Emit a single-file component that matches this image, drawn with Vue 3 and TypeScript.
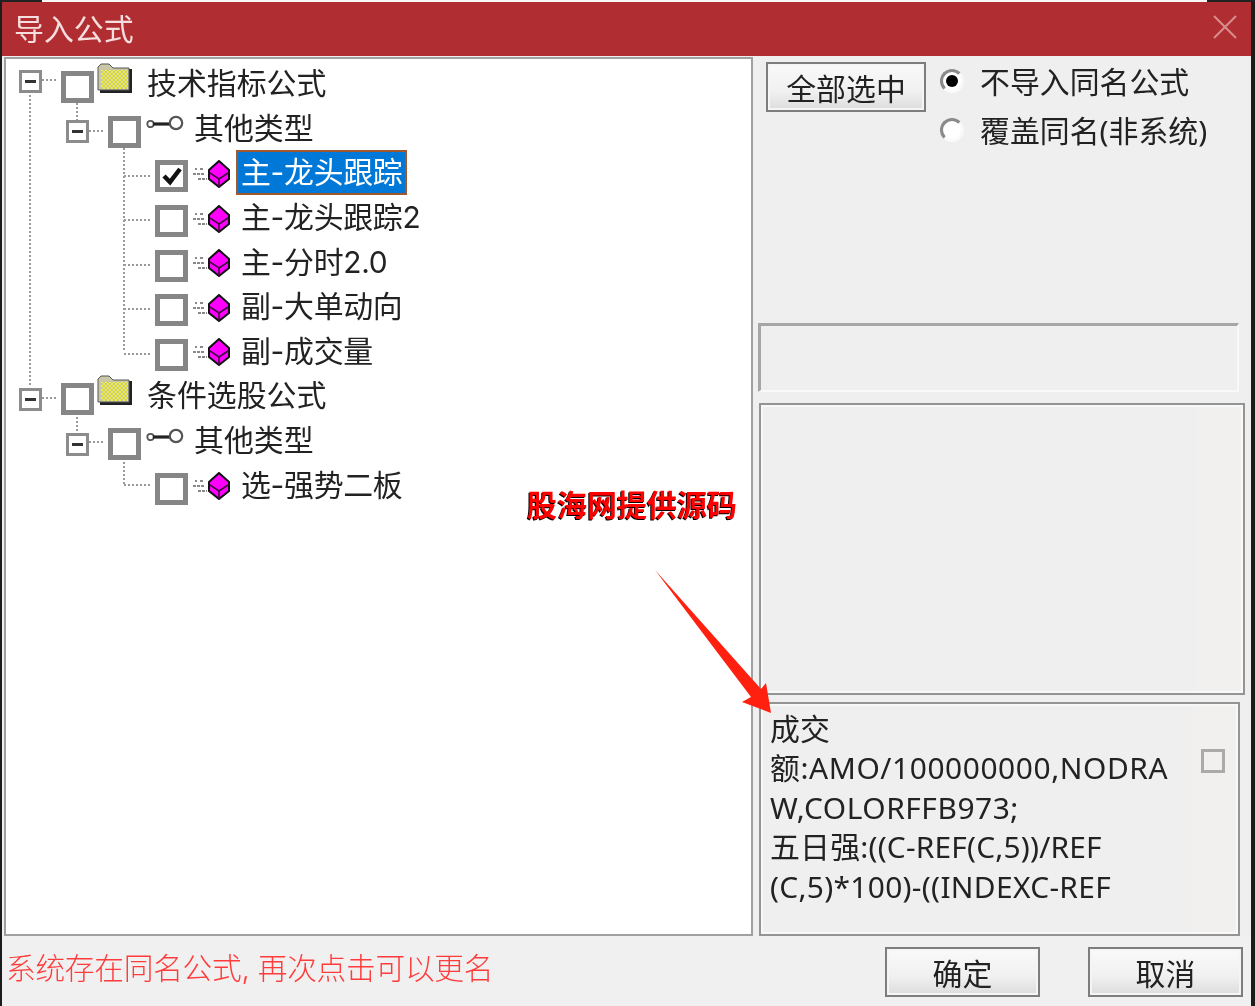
<script setup lang="ts">
interface Row {
  label: string
  depth: number
  kind: 'folder' | 'key' | 'cube'
  expander?: boolean
  checked?: boolean
  selected?: boolean
  first?: boolean
}

const rows: Row[] = [
  { label: '技术指标公式', depth: 0, kind: 'folder', expander: true, first: true },
  { label: '其他类型', depth: 1, kind: 'key', expander: true },
  { label: '主-龙头跟踪', depth: 2, kind: 'cube', checked: true, selected: true },
  { label: '主-龙头跟踪2', depth: 2, kind: 'cube' },
  { label: '主-分时2.0', depth: 2, kind: 'cube' },
  { label: '副-大单动向', depth: 2, kind: 'cube' },
  { label: '副-成交量', depth: 2, kind: 'cube' },
  { label: '条件选股公式', depth: 0, kind: 'folder', expander: true },
  { label: '其他类型', depth: 1, kind: 'key', expander: true },
  { label: '选-强势二板', depth: 2, kind: 'cube' },
]

const formula = [
  '成交',
  '额:AMO/100000000,NODRA',
  'W,COLORFFB973;',
  '五日强:((C-REF(C,5))/REF',
  '(C,5)*100)-((INDEXC-REF',
]

const connectors = [
  'M24 36V326',
  'M36 21H52',
  'M71 44V61',
  'M83 72H99',
  'M118 89V293',
  'M118 117H144',
  'M118 161H144',
  'M118 206H144',
  'M118 250H144',
  'M118 295H144',
  'M36 339H52',
  'M71 354V373',
  'M83 383H99',
  'M118 399V426',
  'M118 426H144',
]
</script>

<template>
  <div class="screen">
    <div class="top-strip"></div>
    <div class="window">
      <header class="titlebar">
        <span class="title">导入公式</span>
        <svg class="close" width="24" height="24" viewBox="0 0 24 24" aria-hidden="true">
          <path d="M1 1L23 23M23 1L1 23" stroke="#d98c8c" stroke-width="2" fill="none" />
        </svg>
      </header>

      <div class="body">
        <section class="tree">
          <svg class="connectors" width="200" height="460" viewBox="0 0 200 460" aria-hidden="true">
            <path
              v-for="(d, i) in connectors"
              :key="i"
              :d="d"
              stroke="#9a9a9a"
              stroke-width="2"
              stroke-dasharray="2 2"
              fill="none"
            />
          </svg>

          <div
            v-for="(row, i) in rows"
            :key="i"
            class="row"
            :class="'depth-' + row.depth"
          >
            <span class="expander-slot">
              <span v-if="row.expander" class="expander" :class="{ raised: row.first }"><i></i></span>
            </span>
            <span class="check">
              <svg v-if="row.checked" width="22" height="22" viewBox="0 0 22 22" aria-hidden="true">
                <path d="M3 11L9 17L19 4" stroke="#111" stroke-width="4.5" fill="none" />
              </svg>
            </span>

            <svg v-if="row.kind === 'folder'" class="icon folder" width="38" height="32" viewBox="0 0 38 32" aria-hidden="true">
              <defs>
                <pattern :id="'dither' + i" width="4" height="4" patternUnits="userSpaceOnUse">
                  <rect width="4" height="4" fill="#f0ee3c" />
                  <rect width="2" height="2" fill="#c9c98c" />
                  <rect x="2" y="2" width="2" height="2" fill="#c9c98c" />
                </pattern>
              </defs>
              <path d="M3 30V5L6 2H13L17 6H35V30Z" fill="#222" />
              <path d="M1 27V4L4 1H12L16 5H32V27Z" fill="#c8c8a8" stroke="#555" stroke-width="1" />
              <rect x="4" y="7" width="27" height="19" :fill="'url(#dither' + i + ')'" />
            </svg>

            <svg v-else-if="row.kind === 'key'" class="icon key" width="38" height="18" viewBox="0 0 38 18" aria-hidden="true">
              <circle cx="4.5" cy="9" r="3.2" fill="#fff" stroke="#555" stroke-width="1.8" />
              <rect x="7" y="7.4" width="17" height="3.2" fill="#222" />
              <circle cx="30" cy="8" r="6.2" fill="#fff" stroke="#555" stroke-width="2.2" />
            </svg>

            <svg v-else class="icon cube" width="38" height="28" viewBox="0 0 38 28" aria-hidden="true">
              <path d="M3 9H5M8 9H12M1 14H13M6 19H15" stroke="#888" stroke-width="2" stroke-dasharray="3 1" fill="none" />
              <path d="M27 1L37 10V19L27 27L17 19V10Z" fill="#ff00ff" stroke="#111" stroke-width="2" />
              <path d="M18 13L27 19L36 13M27 19V27" fill="none" stroke="#400a40" stroke-width="1.6" />
            </svg>

            <span class="label" :class="[row.kind + '-label', { selected: row.selected }]">{{ row.label }}</span>
          </div>
        </section>

        <aside class="side">
          <div class="side-top">
            <button class="btn select-all" type="button">全部选中</button>
            <div class="radios">
              <label class="radio-row">
                <span class="radio on"></span>
                <span class="radio-text">不导入同名公式</span>
              </label>
              <label class="radio-row">
                <span class="radio"></span>
                <span class="radio-text">覆盖同名(非系统)</span>
              </label>
            </div>
          </div>
          <div class="box-name"></div>
          <div class="box-list"></div>
          <div class="box-formula">
            <div class="formula-text">
              <div v-for="(line, i) in formula" :key="i" class="formula-line" :class="'line-' + i">{{ line }}</div>
            </div>
            <span class="small-check"></span>
          </div>
        </aside>
      </div>

      <footer class="footer">
        <span class="status">系统存在同名公式, 再次点击可以更名</span>
        <div class="footer-buttons">
          <button class="btn action" type="button">确定</button>
          <button class="btn action" type="button">取消</button>
        </div>
      </footer>
    </div>

    <div class="watermark">股海网提供源码</div>
    <svg class="arrow" width="130" height="155" viewBox="0 0 130 155" aria-hidden="true">
      <polygon points="5,0 111,119 116,113 121,143 92,132 101,127" fill="#ff2010" />
    </svg>
  </div>
</template>

<style>
html,
body {
  margin: 0;
  background: #1c1c1c;
}
</style>

<style scoped>
.screen {
  position: relative;
  width: 1255px;
  height: 1006px;
  overflow: hidden;
  background: #1c1c1c;
  font-family: Inter, "Noto Sans CJK SC", sans-serif;
  color: #222;
  filter: blur(0.5px);
}

.top-strip {
  height: 2px;
  background: linear-gradient(to right, #222 0 42px, #f6f6f6 42px 1207px, #222 1207px);
}

.window {
  width: 1249px;
  height: 1004px;
  margin-left: 2px;
  background: #efefef;
  display: flex;
  flex-direction: column;
}

.titlebar {
  height: 54px;
  flex: none;
  background: #b02e32;
  display: flex;
  align-items: center;
  justify-content: space-between;
  padding: 0 14px 0 12px;
  box-sizing: border-box;
}

.title {
  font-size: 29.9px;
  line-height: 54px;
  color: #f6dede;
}

.close {
  margin-bottom: 4px;
}

.body {
  flex: none;
  height: 880px;
  display: flex;
  padding-top: 1px;
  box-sizing: border-box;
}

.tree {
  position: relative;
  width: 749px;
  height: 879px;
  margin-left: 2px;
  flex: none;
  box-sizing: border-box;
  padding-top: 6px;
  background: #fff;
  border: 2px solid #a0a0a0;
}

.connectors {
  position: absolute;
  left: 0;
  top: 0;
  pointer-events: none;
}

.row {
  position: relative;
  display: flex;
  align-items: center;
  height: 44.6px;
  white-space: nowrap;
}

.depth-0 {
  padding-left: 13px;
}

.depth-1 {
  padding-left: 60px;
}

.depth-2 {
  padding-left: 107px;
}

.expander-slot {
  width: 42px;
  flex: none;
  display: flex;
  align-items: center;
}

.expander {
  width: 23px;
  height: 23px;
  box-sizing: border-box;
  border: 3px solid #8c8c8c;
  background: #fff;
  display: flex;
  align-items: center;
  justify-content: center;
}

.expander.raised {
  margin-bottom: 12px;
}

.expander i {
  display: block;
  width: 11px;
  height: 3px;
  background: #333;
}

.check {
  width: 33px;
  height: 32px;
  flex: none;
  box-sizing: border-box;
  border: 5px solid #868686;
  background: #fff;
  display: flex;
  align-items: center;
  justify-content: center;
}

.icon {
  flex: none;
}

.folder {
  margin-left: 3px;
  margin-bottom: 17px;
}

.key {
  margin-left: 5px;
  margin-bottom: 15px;
}

.cube {
  margin-left: 4px;
  margin-bottom: 5px;
}

.label {
  font-size: 29.9px;
  line-height: 41px;
  border: 2px solid transparent;
  padding: 0 3px;
  margin-bottom: 7px;
  color: #222;
}

.folder-label {
  margin-left: 7px;
}

.key-label {
  margin-left: 5px;
}

.cube-label {
  margin-left: 6px;
  letter-spacing: -0.3px;
}

.label.selected {
  background: #0078d7;
  color: #fff;
  border-color: #a0582c;
}

.side {
  width: 490px;
  margin-left: 5px;
  flex: none;
  display: flex;
  flex-direction: column;
}

.side-top {
  height: 266px;
  flex: none;
  display: flex;
  align-items: flex-start;
  padding: 5px 0 0 8px;
  box-sizing: border-box;
}

.btn {
  font-family: inherit;
  font-size: 29.9px;
  color: #222;
  padding: 0;
  border: 2px solid #7d7d7d;
  background: linear-gradient(to bottom, #fafafa 0%, #f0f0f0 60%, #dcdcdc 100%);
  box-shadow: inset 0 0 0 2px #f5f5f5;
  display: flex;
  align-items: center;
  justify-content: center;
  box-sizing: border-box;
}

.select-all {
  width: 160px;
  height: 50px;
  flex: none;
}

.radios {
  margin-left: 14px;
  margin-top: -4px;
  display: flex;
  flex-direction: column;
}

.radio-row {
  height: 49px;
  display: flex;
  align-items: center;
  font-family: "Noto Sans", "Noto Sans CJK SC", sans-serif;
  font-size: 29.9px;
}

.radio-text {
  margin-bottom: 6px;
}

.radio {
  width: 24px;
  height: 24px;
  margin-right: 16px;
  margin-bottom: 3px;
  flex: none;
  box-sizing: border-box;
  border-radius: 50%;
  border: 3px solid;
  border-color: #8a8a8a #f8f8f8 #fbfbfb #8a8a8a;
  background: #fff;
  display: flex;
  align-items: center;
  justify-content: center;
}

.radio.on::after {
  content: "";
  width: 12px;
  height: 12px;
  border-radius: 50%;
  background: #000;
}

.box-name {
  width: 481px;
  height: 69px;
  flex: none;
  box-sizing: border-box;
  border-style: solid;
  border-width: 3px 2px 2px 3px;
  border-color: #a6a6a6 #f9f9f9 #f9f9f9 #a6a6a6;
}

.box-list {
  width: 486px;
  height: 292px;
  margin: 11px 0 0 1px;
  flex: none;
  box-sizing: border-box;
  border: 2px solid #949494;
  box-shadow: inset 0 0 0 2px #f8f8f8;
  background: linear-gradient(to right, #efefef calc(100% - 46px), #f1f0ee 0);
}

.box-formula {
  width: 481px;
  height: 234px;
  margin: 7px 0 0 1px;
  flex: none;
  position: relative;
  box-sizing: border-box;
  border: 2px solid #949494;
  box-shadow: inset 0 0 0 2px #f8f8f8;
  background: linear-gradient(to right, #efefef calc(100% - 46px), #f1f0ee 0);
  display: flex;
  justify-content: space-between;
  padding: 5px 13px 0 9px;
}

.formula-line {
  font-family: "Noto Sans", "Noto Sans CJK SC", sans-serif;
  font-size: 29.9px;
  line-height: 39.4px;
  white-space: nowrap;
  color: #222;
}

.line-1 {
  letter-spacing: 0.58px;
}

.line-2 {
  letter-spacing: 0.55px;
}

.line-3 {
  letter-spacing: 0.2px;
}

.line-4 {
  letter-spacing: 0.32px;
}

.small-check {
  width: 24px;
  height: 24px;
  margin-top: 40px;
  flex: none;
  box-sizing: border-box;
  border: 3px solid #aaa;
}

.footer {
  flex: 1;
  display: flex;
  justify-content: space-between;
  background: #f0f0f0;
  padding: 11px 8px 0 4px;
}

.status {
  font-size: 29.7px;
  font-weight: 300;
  line-height: 42px;
  letter-spacing: -0.25px;
  color: #ff3b3b;
  white-space: nowrap;
}

.footer-buttons {
  display: flex;
  gap: 48px;
}

.action {
  width: 155px;
  height: 50px;
}

.watermark {
  position: absolute;
  left: 527px;
  top: 484px;
  font-size: 30px;
  line-height: 42px;
  font-weight: 700;
  color: #ff0000;
  text-shadow: -1px 1px 0 #000;
  white-space: nowrap;
}

.arrow {
  position: absolute;
  left: 650px;
  top: 570px;
}
</style>
